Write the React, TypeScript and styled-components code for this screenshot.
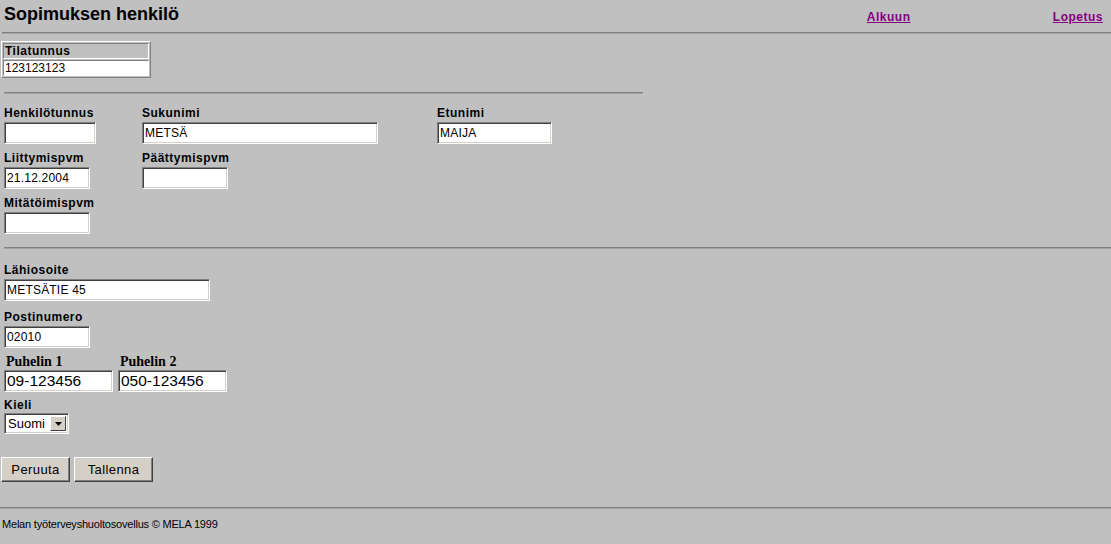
import React from 'react';
import styled, { createGlobalStyle } from 'styled-components';

const GlobalStyle = createGlobalStyle`
  html, body {
    margin: 0;
    padding: 0;
    background: #c0c0c0;
    font-family: "Liberation Sans", Arial, sans-serif;
    color: #000;
  }
`;

const Page = styled.div`
  width: 1111px;
  min-height: 544px;
  background: #c0c0c0;
`;

const Header = styled.div`
  display: flex;
  align-items: flex-start;
  height: 32px;
  padding: 4px 8px 0 4px;
  box-sizing: border-box;
`;

const Title = styled.h1`
  flex: 1;
  margin: 0;
  font-size: 18px;
  line-height: 20px;
  font-weight: bold;
`;

const NavCell = styled.div<{ $width?: number }>`
  width: ${(p) => (p.$width ? `${p.$width}px` : 'auto')};
  padding-top: 3px;
`;

const NavLink = styled.a`
  color: #800080;
  font-size: 12px;
  line-height: 14px;
  font-weight: bold;
  letter-spacing: 0.5px;
  text-decoration: underline;
  cursor: pointer;
`;

const Rule = styled.div<{ $left?: number; $width?: string; $top?: number }>`
  height: 0;
  margin: ${(p) => p.$top ?? 0}px 0 0 ${(p) => p.$left ?? 0}px;
  width: ${(p) => p.$width ?? 'auto'};
  border-top: 1px solid #808080;
  border-bottom: 1px solid #a4a4a4;
`;

const InfoTable = styled.table`
  margin: 7px 0 0 1px;
  width: 150px;
  border-collapse: separate;
  border-spacing: 1px;
  border: 1px solid;
  border-color: #ffffff #808080 #808080 #ffffff;
  font-size: 12px;
`;

const InfoCell = styled.td<{ $head?: boolean }>`
  padding: 0 1px;
  line-height: 14px;
  border: 1px solid;
  border-color: #808080 #ffffff #ffffff #808080;
  background: ${(p) => (p.$head ? '#c0c0c0' : '#ffffff')};
  font-weight: ${(p) => (p.$head ? 'bold' : 'normal')};
  letter-spacing: ${(p) => (p.$head ? '0.5px' : '0')};
`;

const Section = styled.div<{ $top: number }>`
  margin-top: ${(p) => p.$top}px;
  padding-left: 4px;
`;

const Row = styled.div<{ $gap?: number }>`
  display: flex;
  align-items: flex-start;
  margin-top: ${(p) => p.$gap ?? 0}px;
`;

const Field = styled.div<{ $width?: number }>`
  display: flex;
  flex-direction: column;
  width: ${(p) => (p.$width ? `${p.$width}px` : 'auto')};
`;

const Label = styled.label`
  font-size: 12px;
  line-height: 14px;
  font-weight: bold;
  letter-spacing: 0.5px;
  margin-bottom: 2px;
  white-space: nowrap;
`;

const SerifLabel = styled.label`
  font-family: "Liberation Serif", "Times New Roman", serif;
  font-size: 14px;
  line-height: 16px;
  font-weight: bold;
  padding-left: 2px;
  white-space: nowrap;
`;

const TextInput = styled.input<{ $w: number; $big?: boolean }>`
  width: ${(p) => p.$w}px;
  height: 22px;
  box-sizing: border-box;
  margin: 0;
  padding: 0 0 0 2px;
  background: #ffffff;
  border: 1px solid;
  border-color: #808080 #ffffff #ffffff #808080;
  box-shadow: inset 1px 1px 0 #404040, inset -1px -1px 0 #d4d0c8;
  font-family: "Liberation Sans", Arial, sans-serif;
  font-size: ${(p) => (p.$big ? '15.5px' : '12px')};
  letter-spacing: ${(p) => (p.$big ? '0' : '0.2px')};
  color: #000;
  outline: none;
`;

const SelectBox = styled.div`
  display: flex;
  width: 65px;
  height: 21px;
  box-sizing: border-box;
  margin-top: -1px;
  border: 1px solid;
  border-color: #808080 #ffffff #ffffff #808080;
  box-shadow: inset 1px 1px 0 #404040, inset -1px -1px 0 #d4d0c8;
  background: #ffffff;
  padding: 2px;
`;

const SelectValue = styled.span`
  flex: 1;
  font-size: 13px;
  line-height: 15px;
  padding-left: 1px;
`;

const SelectArrow = styled.span`
  width: 16px;
  box-sizing: border-box;
  background: #d4d0c8;
  border: 1px solid;
  border-color: #ffffff #404040 #404040 #ffffff;
  display: flex;
  align-items: center;
  justify-content: center;
`;

const Buttons = styled.div`
  display: flex;
  gap: 4px;
  margin: 23px 0 0 1px;
`;

const Button = styled.button<{ $w: number }>`
  width: ${(p) => p.$w}px;
  height: 25px;
  padding: 0;
  margin: 0;
  background: #d4d0c8;
  border: 1px solid;
  border-color: #ffffff #404040 #404040 #ffffff;
  box-shadow: inset -1px -1px 0 #808080;
  font-family: "Liberation Sans", Arial, sans-serif;
  font-size: 13px;
  letter-spacing: 0.4px;
  color: #000;
  cursor: pointer;
`;

const Footer = styled.div`
  margin: 9px 0 0 2px;
  font-size: 11px;
  line-height: 13px;
  letter-spacing: -0.2px;
`;

export default function App() {
  return (
    <Page>
      <GlobalStyle />
      <Header>
        <Title>Sopimuksen henkilö</Title>
        <NavCell $width={186}>
          <NavLink>Alkuun</NavLink>
        </NavCell>
        <NavCell>
          <NavLink>Lopetus</NavLink>
        </NavCell>
      </Header>
      <Rule $left={2} />

      <InfoTable>
        <tbody>
          <tr>
            <InfoCell $head>Tilatunnus</InfoCell>
          </tr>
          <tr>
            <InfoCell>123123123</InfoCell>
          </tr>
        </tbody>
      </InfoTable>

      <Rule $left={4} $width="639px" $top={14} />

      <Section $top={12}>
        <Row>
          <Field $width={138}>
            <Label>Henkilötunnus</Label>
            <TextInput $w={92} defaultValue="" />
          </Field>
          <Field $width={295}>
            <Label>Sukunimi</Label>
            <TextInput $w={236} defaultValue="METSÄ" />
          </Field>
          <Field>
            <Label>Etunimi</Label>
            <TextInput $w={115} defaultValue="MAIJA" />
          </Field>
        </Row>
        <Row $gap={7}>
          <Field $width={138}>
            <Label>Liittymispvm</Label>
            <TextInput $w={86} defaultValue="21.12.2004" />
          </Field>
          <Field>
            <Label>Päättymispvm</Label>
            <TextInput $w={86} defaultValue="" />
          </Field>
        </Row>
        <Row $gap={7}>
          <Field>
            <Label>Mitätöimispvm</Label>
            <TextInput $w={86} defaultValue="" />
          </Field>
        </Row>
      </Section>

      <Rule $left={4} $top={13} />

      <Section $top={14}>
        <Field>
          <Label>Lähiosoite</Label>
          <TextInput $w={206} defaultValue="METSÄTIE 45" />
        </Field>
        <Row $gap={9}>
          <Field>
            <Label>Postinumero</Label>
            <TextInput $w={86} defaultValue="02010" />
          </Field>
        </Row>
        <Row $gap={6}>
          <Field $width={114}>
            <SerifLabel>Puhelin 1</SerifLabel>
            <TextInput $w={109} $big defaultValue="09-123456" />
          </Field>
          <Field>
            <SerifLabel>Puhelin 2</SerifLabel>
            <TextInput $w={109} $big defaultValue="050-123456" />
          </Field>
        </Row>
        <Row $gap={6}>
          <Field>
            <Label>Kieli</Label>
            <SelectBox>
              <SelectValue>Suomi</SelectValue>
              <SelectArrow>
                <svg width="7" height="4" viewBox="0 0 7 4">
                  <path d="M0 0h7L3.5 4z" fill="#000" />
                </svg>
              </SelectArrow>
            </SelectBox>
          </Field>
        </Row>
      </Section>

      <Buttons>
        <Button $w={69}>Peruuta</Button>
        <Button $w={79}>Tallenna</Button>
      </Buttons>

      <Rule $top={25} />
      <Footer>Melan työterveyshuoltosovellus © MELA 1999</Footer>
    </Page>
  );
}
